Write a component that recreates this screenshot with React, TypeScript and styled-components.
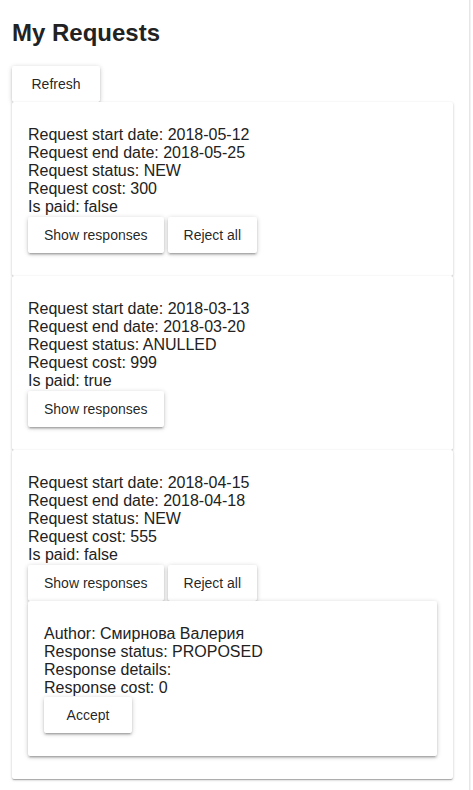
import React from "react";
import styled, { createGlobalStyle } from "styled-components";

const Global = createGlobalStyle`
  html, body { margin: 0; padding: 0; background: #ffffff; }
  body { font-family: "Liberation Sans", Arial, sans-serif; color: rgba(0,0,0,0.87); }
`;

const Page = styled.div`
  width: 441px;
  min-height: 790px;
  padding: 0 16px 10px 12px;
  border-right: 1px solid #e6e6e6;
  box-shadow: 1px 0 0 #f3f3f3;
  box-sizing: content-box;
`;

const Title = styled.h2`
  margin: 0;
  padding: 19px 0 19px;
  font-size: 24px;
  line-height: 27.6px;
  font-weight: bold;
  color: #222;
`;

const Button = styled.button`
  font-family: "Liberation Sans", Arial, sans-serif;
  font-size: 14px;
  color: rgba(0,0,0,0.87);
  background: #fff;
  border: 0;
  border-radius: 2px;
  min-width: 88px;
  height: 36px;
  padding: 0 16px;
  margin: 0;
  box-shadow: 0px 1px 5px 0px rgba(0,0,0,0.2), 0px 2px 2px 0px rgba(0,0,0,0.14), 0px 3px 1px -2px rgba(0,0,0,0.12);
  cursor: pointer;
`;

const List = styled.div`
  display: flex;
  flex-direction: column;
`;

const Card = styled.div<{ $nested?: boolean }>`
  background: #fff;
  border-radius: 2px;
  padding: 24px 16px 23px;
  box-shadow: ${(p) =>
    p.$nested
      ? "0px 1px 5px 0px rgba(0,0,0,0.2), 0px 2px 2px 0px rgba(0,0,0,0.14), 0px 3px 1px -2px rgba(0,0,0,0.12)"
      : "0px 1px 3px 0px rgba(0,0,0,0.2), 0px 1px 1px 0px rgba(0,0,0,0.14), 0px 2px 1px -1px rgba(0,0,0,0.12)"};
  position: relative;
`;

const Line = styled.div`
  font-size: 16px;
  line-height: 18.2px;
  color: #222;
`;

const Actions = styled.div`
  display: flex;
  gap: 4px;
`;

type Resp = { author: string; status: string; details: string; cost: number };
type Req = {
  start: string;
  end: string;
  status: string;
  cost: number;
  paid: boolean;
  reject: boolean;
  responses?: Resp[];
};

const requests: Req[] = [
  { start: "2018-05-12", end: "2018-05-25", status: "NEW", cost: 300, paid: false, reject: true },
  { start: "2018-03-13", end: "2018-03-20", status: "ANULLED", cost: 999, paid: true, reject: false },
  {
    start: "2018-04-15",
    end: "2018-04-18",
    status: "NEW",
    cost: 555,
    paid: false,
    reject: true,
    responses: [{ author: "Смирнова Валерия", status: "PROPOSED", details: "", cost: 0 }],
  },
];

export default function App() {
  return (
    <>
      <Global />
      <Page>
        <Title>My Requests</Title>
        <Button>Refresh</Button>
        <List>
          {requests.map((r, i) => (
            <Card key={i}>
              <Line>Request start date: {r.start}</Line>
              <Line>Request end date: {r.end}</Line>
              <Line>Request status: {r.status}</Line>
              <Line>Request cost: {r.cost}</Line>
              <Line>Is paid: {String(r.paid)}</Line>
              <Actions>
                <Button>Show responses</Button>
                {r.reject && <Button>Reject all</Button>}
              </Actions>
              {r.responses?.map((s, j) => (
                <Card $nested key={j}>
                  <Line>Author: {s.author}</Line>
                  <Line>Response status: {s.status}</Line>
                  <Line>Response details: {s.details}</Line>
                  <Line>Response cost: {s.cost}</Line>
                  <Actions>
                    <Button>Accept</Button>
                  </Actions>
                </Card>
              ))}
            </Card>
          ))}
        </List>
      </Page>
    </>
  );
}
